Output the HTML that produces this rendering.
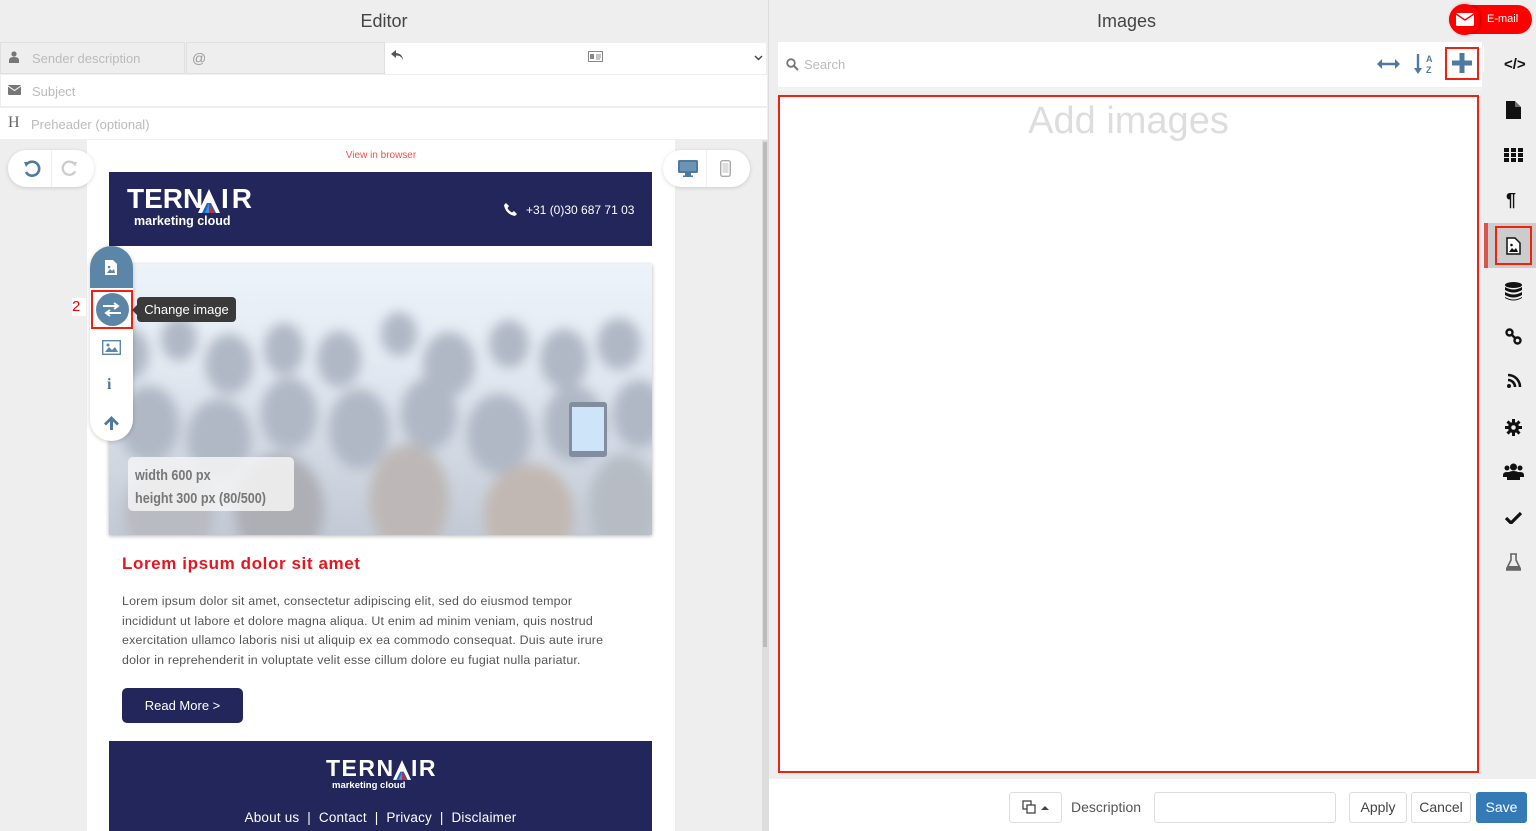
<!DOCTYPE html>
<html><head><meta charset="utf-8"><style>
*{box-sizing:border-box;margin:0;padding:0}
body{width:1536px;height:831px;overflow:hidden;background:#eee;font-family:"Liberation Sans",sans-serif;position:relative}
.abs{position:absolute}
.ph{color:#bbb;font-size:13px}
.ic{position:absolute}
.lg{position:absolute;color:#fff;font-weight:bold;white-space:nowrap}
</style></head><body>
<!-- LEFT -->
<div class="abs" style="left:0;top:0;width:768px;height:42px;background:#eee;text-align:center;line-height:42px;font-size:18px;color:#444">Editor</div>
<div class="abs" style="left:0;top:42px;width:185px;height:32px;background:#eee;border:1px solid #e0e0e0"></div>
<div class="abs" style="left:186px;top:42px;width:199px;height:32px;background:#eee;border:1px solid #e0e0e0"></div>
<div class="abs" style="left:385px;top:43px;width:381px;height:31px;background:#fff"></div>
<svg class="ic" style="left:9px;top:51px" width="10" height="12" viewBox="0 0 10 12"><circle cx="5" cy="3" r="2.6" fill="#777"/><path d="M0 12V9q0-3 5-3t5 3v3z" fill="#777"/></svg>
<div class="abs ph" style="left:32px;top:51px">Sender description</div>
<div class="abs" style="left:192px;top:50px;color:#999;font-size:14px">@</div>
<svg class="ic" style="left:391px;top:50px" width="13" height="11" viewBox="0 0 13 11"><path d="M5 0L0 4l5 4V5.5c4 0 6 1.5 7 5 0-4-2-7-7-7.5z" fill="#555"/></svg>
<svg class="ic" style="left:588px;top:51px" width="15" height="11" viewBox="0 0 15 11"><rect x=".5" y=".5" width="14" height="10" fill="#fff" stroke="#888"/><rect x="2" y="3" width="4" height="5" fill="#888"/><path d="M8 4h5M8 6h5M8 8h4" stroke="#888"/></svg>
<svg class="ic" style="left:754px;top:55px" width="9" height="6" viewBox="0 0 9 6"><path d="M1 1l3.5 3.5L8 1" fill="none" stroke="#444" stroke-width="1.4"/></svg>
<div class="abs" style="left:1px;top:75px;width:766px;height:31px;background:#fff"></div>
<svg class="ic" style="left:8px;top:85px" width="13" height="10" viewBox="0 0 13 10"><rect width="13" height="10" rx="1" fill="#777"/><path d="M0 1l6.5 4.5L13 1" stroke="#fff" fill="none"/></svg>
<div class="abs ph" style="left:32px;top:84px">Subject</div>
<div class="abs" style="left:0;top:108px;width:767px;height:31px;background:#fff"></div>
<div class="abs" style="left:8px;top:114px;font-family:'Liberation Serif',serif;font-size:16px;color:#666">H</div>
<div class="abs ph" style="left:31px;top:117px">Preheader (optional)</div>
<!-- scrollbar -->
<div class="abs" style="left:762px;top:140px;width:6px;height:691px;background:#ddd"></div>
<div class="abs" style="left:763px;top:142px;width:4px;height:505px;background:#bbb"></div>
<!-- email page -->
<div class="abs" style="left:87px;top:140px;width:588px;height:691px;background:#fff"></div>
<div class="abs" style="left:87px;top:150px;width:588px;text-align:center;font-size:10px;color:#f05050">View in browser</div>
<!-- undo/redo -->
<div class="abs" style="left:8px;top:150px;width:86px;height:37px;background:#fff;border-radius:19px;box-shadow:0 1px 4px rgba(0,0,0,.15)"></div>
<div class="abs" style="left:51px;top:150px;width:1px;height:37px;background:#eee"></div>
<svg class="ic" style="left:23px;top:160px" width="18" height="18" viewBox="0 0 18 18"><path d="M4 4a7 7 0 1 1-1 8" fill="none" stroke="#4f7aa0" stroke-width="2.6"/><path d="M1 2l6 0-4 5z" fill="#4f7aa0"/></svg>
<svg class="ic" style="left:61px;top:160px" width="17" height="17" viewBox="0 0 18 18"><path d="M14 4a7 7 0 1 0 1 8" fill="none" stroke="#ccc" stroke-width="2.4"/><path d="M17 2l-6 0 4 5z" fill="#ccc"/></svg>
<div class="abs" style="left:663px;top:150px;width:87px;height:37px;background:#fff;border-radius:19px;box-shadow:0 1px 4px rgba(0,0,0,.15)"></div>
<div class="abs" style="left:706px;top:150px;width:1px;height:37px;background:#eee"></div>
<svg class="ic" style="left:678px;top:160px" width="20" height="17" viewBox="0 0 20 17"><rect x="0" y="0" width="20" height="13" rx="1.5" fill="#4f7aa0"/><rect x="2" y="2" width="16" height="9" fill="#6d93b5"/><rect x="7" y="13" width="6" height="3" fill="#4f7aa0"/><rect x="5" y="15.5" width="10" height="1.5" fill="#4f7aa0"/></svg>
<svg class="ic" style="left:720px;top:160px" width="11" height="17" viewBox="0 0 11 17"><rect x=".7" y=".7" width="9.6" height="15.6" rx="2" fill="none" stroke="#aaa" stroke-width="1.4"/><rect x="2.5" y="3" width="6" height="10" fill="#ddd"/></svg>
<!-- header -->
<div class="abs" style="left:109px;top:172px;width:543px;height:74px;background:#22265a"></div>
<div class="lg" style="left:127px;top:183px;font-size:28px">TERN</div>
<svg class="ic" style="left:198px;top:189px" width="22" height="24" viewBox="0 0 22 24"><path d="M11 0L0 24h7l4-9 4 9h7z" fill="#fff"/><path d="M4 24l5-10h4l5 10z" fill="#1e62c8"/><path d="M11 14l5 10h-5z" fill="#e0202a"/><path d="M7 24l4-10v10z" fill="#2d9be0"/></svg>
<div class="lg" style="left:221px;top:183px;font-size:28px;letter-spacing:3px">IR</div>
<div class="abs" style="left:134px;top:214px;color:#fff;font-weight:bold;font-size:12.5px">marketing cloud</div>
<svg class="ic" style="left:504px;top:203px" width="13" height="13" viewBox="0 0 13 13"><path d="M2 0l3 3-1.5 2c1 2 2.5 3.5 4.5 4.5L10 8l3 3-2 2C5 12 1 8 0 2z" fill="#fff"/></svg>
<div class="abs" style="left:526px;top:203px;color:#fff;font-size:12px">+31 (0)30 687 71 03</div>
<!-- image -->
<div class="abs" style="left:109px;top:264px;width:543px;height:271px;box-shadow:0 1px 4px rgba(0,0,0,.3);overflow:hidden;background:#dde5ef">
<svg width="543" height="271" viewBox="0 0 543 271"><defs><filter id="b"><feGaussianBlur stdDeviation="6"/></filter><linearGradient id="sk" x1="0" y1="0" x2="0" y2="1"><stop offset="0" stop-color="#e6eef7"/><stop offset=".35" stop-color="#d8e2ee"/><stop offset="1" stop-color="#a9b3c3"/></linearGradient></defs>
<rect width="543" height="271" fill="url(#sk)"/>
<g filter="url(#b)" fill="#8e9aad">
<ellipse cx="20" cy="90" rx="20" ry="26"/><ellipse cx="70" cy="75" rx="18" ry="22"/><ellipse cx="120" cy="100" rx="24" ry="30"/><ellipse cx="175" cy="85" rx="20" ry="26"/><ellipse cx="230" cy="95" rx="22" ry="28"/><ellipse cx="290" cy="70" rx="18" ry="22"/><ellipse cx="340" cy="100" rx="26" ry="32"/><ellipse cx="400" cy="80" rx="20" ry="24"/><ellipse cx="455" cy="95" rx="24" ry="30"/><ellipse cx="510" cy="80" rx="22" ry="26"/>
<ellipse cx="40" cy="160" rx="30" ry="38"/><ellipse cx="110" cy="175" rx="32" ry="40"/><ellipse cx="180" cy="150" rx="28" ry="36"/><ellipse cx="250" cy="165" rx="30" ry="40"/><ellipse cx="320" cy="150" rx="28" ry="36"/><ellipse cx="390" cy="170" rx="32" ry="40"/><ellipse cx="465" cy="160" rx="30" ry="38"/><ellipse cx="530" cy="150" rx="26" ry="34"/>
<ellipse cx="60" cy="250" rx="45" ry="50" fill="#9b9ea8"/><ellipse cx="170" cy="245" rx="45" ry="55" fill="#8b8d96"/><ellipse cx="300" cy="235" rx="40" ry="55" fill="#a19a98"/><ellipse cx="420" cy="250" rx="45" ry="50" fill="#a89a92"/><ellipse cx="515" cy="240" rx="35" ry="50" fill="#98a0ab"/>
</g>
<rect x="460" y="138" width="38" height="55" rx="3" fill="#4c5d78"/><rect x="463" y="143" width="32" height="44" fill="#b9d8f5"/>
<rect width="543" height="271" fill="#fff" opacity=".3"/>
</svg></div>
<div class="abs" style="left:128px;top:457px;width:166px;height:54px;background:rgba(245,245,245,.85);border-radius:5px"></div>
<div class="abs" style="left:135px;top:464px;font-size:15px;font-weight:bold;color:#777;line-height:23px;white-space:nowrap;transform:scaleX(.84);transform-origin:left top">width 600 px<br>height 300 px (80/500)</div>
<!-- toolbar -->
<div class="abs" style="left:90px;top:246px;width:43px;height:195px;background:#fff;border-radius:22px;box-shadow:0 1px 5px rgba(0,0,0,.2);overflow:hidden"><div style="height:42px;background:#5b86a8"></div></div>
<svg class="ic" style="left:104px;top:259px" width="14" height="17" viewBox="0 0 14 17"><path d="M1 1h8l4 4v11H1z" fill="#fff"/><path d="M3 14l3-4 2 2 2-2 1 4z" fill="#5b86a8"/><circle cx="5" cy="8" r="1.3" fill="#5b86a8"/></svg>
<div class="abs" style="left:72px;top:298px;width:14px;height:18px;background:#fff;color:#e00;font-size:15px">2</div>
<div class="abs" style="left:91px;top:290px;width:42px;height:39px;border:2px solid #e21"></div>
<div class="abs" style="left:96px;top:293px;width:33px;height:33px;border-radius:50%;background:#5b86a8"></div>
<svg class="ic" style="left:102px;top:302px" width="20" height="15" viewBox="0 0 20 15"><path d="M1 4h15M12 1l4 3-4 3M19 11H4M8 8l-4 3 4 3" fill="none" stroke="#fff" stroke-width="2"/></svg>
<div class="abs" style="left:137px;top:297px;width:99px;height:25px;background:#3a3a3a;border-radius:4px;color:#fff;font-size:13px;line-height:25px;text-align:center">Change image</div>
<div class="abs" style="left:132px;top:305px;border:5px solid transparent;border-right-color:#3a3a3a;border-left:0"></div>
<svg class="ic" style="left:102px;top:340px" width="19" height="15" viewBox="0 0 19 15"><rect x=".7" y=".7" width="17.6" height="13.6" fill="#fff" stroke="#5b86a8" stroke-width="1.4"/><path d="M3 12l4-5 3 3 3-3 3 5z" fill="#5b86a8"/><circle cx="6" cy="5" r="1.5" fill="#5b86a8"/></svg>
<div class="abs" style="left:107px;top:376px;font-weight:bold;color:#4f7aa0;font-size:16px;font-family:'Liberation Serif',serif">i</div>
<svg class="ic" style="left:104px;top:416px" width="15" height="14" viewBox="0 0 15 14"><path d="M7.5 0L0 7.5l2 2 4-4V14h3V5.5l4 4 2-2z" fill="#4f7aa0"/></svg>
<!-- text -->
<div class="abs" style="left:122px;top:554px;color:#e8141e;font-weight:bold;font-size:17px;letter-spacing:.6px">Lorem ipsum dolor sit amet</div>
<div class="abs" style="left:122px;top:592px;white-space:nowrap;color:#555;font-size:12.4px;line-height:19.6px;letter-spacing:.2px">Lorem ipsum dolor sit amet, consectetur adipiscing elit, sed do eiusmod tempor<br>incididunt ut labore et dolore magna aliqua. Ut enim ad minim veniam, quis nostrud<br>exercitation ullamco laboris nisi ut aliquip ex ea commodo consequat. Duis aute irure<br>dolor in reprehenderit in voluptate velit esse cillum dolore eu fugiat nulla pariatur.</div>
<div class="abs" style="left:122px;top:688px;width:121px;height:35px;background:#22265a;border-radius:5px;color:#fff;font-size:13px;line-height:35px;text-align:center">Read More &gt;</div>
<!-- footer -->
<div class="abs" style="left:109px;top:741px;width:543px;height:90px;background:#22265a"></div>
<div class="lg" style="left:326px;top:755px;font-size:23px;letter-spacing:1.5px">TERN</div>
<svg class="ic" style="left:393px;top:760px" width="18" height="20" viewBox="0 0 22 24"><path d="M11 0L0 24h7l4-9 4 9h7z" fill="#fff"/><path d="M4 24l5-10h4l5 10z" fill="#1e62c8"/><path d="M11 14l5 10h-5z" fill="#e0202a"/><path d="M7 24l4-10v10z" fill="#2d9be0"/></svg>
<div class="lg" style="left:411px;top:755px;font-size:23px;letter-spacing:1.5px">IR</div>
<div class="abs" style="left:332px;top:780px;color:#fff;font-weight:bold;font-size:9.5px">marketing cloud</div>
<div class="abs" style="left:109px;top:810px;width:543px;text-align:center;color:#fff;font-size:13.5px;letter-spacing:.2px">About us &nbsp;|&nbsp; Contact &nbsp;|&nbsp; Privacy &nbsp;|&nbsp; Disclaimer</div>

<!-- RIGHT -->
<div class="abs" style="left:768px;top:0;width:1px;height:831px;background:#ddd"></div>
<div class="abs" style="left:769px;top:0;width:715px;height:42px;text-align:center;line-height:42px;font-size:18px;color:#444">Images</div>
<div class="abs" style="left:1449px;top:5px;width:83px;height:29px;background:#f00;border-radius:15px"></div>
<div class="abs" style="left:1449px;top:4px;width:31px;height:31px;background:#f00;border-radius:50%;box-shadow:1px 0 3px rgba(0,0,0,.3)"></div>
<svg class="ic" style="left:1456px;top:13px" width="18" height="13" viewBox="0 0 18 13"><rect width="18" height="13" rx="1.5" fill="#fff"/><path d="M0 1l9 6 9-6" fill="none" stroke="#f00" stroke-width="1.5"/></svg>
<div class="abs" style="left:1487px;top:13px;color:#fff;font-size:11px">E-mail</div>
<div class="abs" style="left:778px;top:42px;width:704px;height:45px;background:#fff"></div>
<svg class="ic" style="left:786px;top:58px" width="13" height="13" viewBox="0 0 13 13"><circle cx="5" cy="5" r="3.8" fill="none" stroke="#777" stroke-width="1.8"/><path d="M8 8l4 4" stroke="#777" stroke-width="2"/></svg>
<div class="abs ph" style="left:804px;top:57px">Search</div>
<svg class="ic" style="left:1377px;top:58px" width="23" height="12" viewBox="0 0 23 12"><path d="M3 6h17" stroke="#4f7aa0" stroke-width="2.4"/><path d="M0 6l5-5v10zM23 6l-5-5v10z" fill="#4f7aa0"/></svg>
<svg class="ic" style="left:1414px;top:53px" width="22" height="22" viewBox="0 0 22 22"><path d="M4 1v16" stroke="#4f7aa0" stroke-width="2.4"/><path d="M0 15l4 6 4-6z" fill="#4f7aa0"/><text x="12" y="9" font-size="9" font-family="Liberation Sans" fill="#4f7aa0" font-weight="bold">A</text><text x="12" y="20" font-size="9" font-family="Liberation Sans" fill="#4f7aa0" font-weight="bold">Z</text></svg>
<div class="abs" style="left:1445px;top:47px;width:34px;height:33px;border:2px solid #e21"></div>
<svg class="ic" style="left:1452px;top:53px" width="20" height="20" viewBox="0 0 20 20"><path d="M7.5 0h5v7.5H20v5h-7.5V20h-5v-7.5H0v-5h7.5z" fill="#4f7aa0"/></svg>
<div class="abs" style="left:1483px;top:46px;width:17px;height:26px;background:#fff;color:#e00;font-size:14px;text-align:center;line-height:26px">1</div>
<div class="abs" style="left:778px;top:88px;width:704px;height:3px;background:#f3f3f3"></div>
<div class="abs" style="left:778px;top:95px;width:701px;height:678px;background:#fff;border:2px solid #e21"></div>
<div class="abs" style="left:780px;top:100px;width:697px;text-align:center;font-size:38px;color:#ddd">Add images</div>
<div class="abs" style="left:769px;top:779px;width:767px;height:52px;background:#fff"></div>
<div class="abs" style="left:1484px;top:42px;width:52px;height:737px;background:#eee"></div>
<!-- sidebar icons -->
<div class="abs" style="left:1504px;top:56px;font-size:15px;font-weight:bold;color:#111">&lt;/&gt;</div>
<svg class="ic" style="left:1506px;top:101px" width="15" height="18" viewBox="0 0 15 18"><path d="M0 0h9l6 6v12H0z" fill="#111"/><path d="M9 0v6h6" fill="#fff" opacity=".4"/></svg>
<svg class="ic" style="left:1504px;top:148px" width="19" height="14" viewBox="0 0 19 14"><g fill="#111"><rect x="0" y="0" width="5" height="4"/><rect x="7" y="0" width="5" height="4"/><rect x="14" y="0" width="5" height="4"/><rect x="0" y="5" width="5" height="4"/><rect x="7" y="5" width="5" height="4"/><rect x="14" y="5" width="5" height="4"/><rect x="0" y="10" width="5" height="4"/><rect x="7" y="10" width="5" height="4"/><rect x="14" y="10" width="5" height="4"/></g></svg>
<div class="abs" style="left:1506px;top:190px;font-size:18px;font-weight:bold;color:#111">¶</div>
<div class="abs" style="left:1484px;top:223px;width:52px;height:45px;background:#ccc"></div>
<div class="abs" style="left:1484px;top:223px;width:4px;height:45px;background:#d9534f"></div>
<div class="abs" style="left:1495px;top:226px;width:37px;height:39px;border:2px solid #e21"></div>
<svg class="ic" style="left:1506px;top:237px" width="15" height="18" viewBox="0 0 15 18"><path d="M1 1h8l5 5v11H1z" fill="#fff" stroke="#111" stroke-width="1.5"/><path d="M3 15l3-4 2 2 2-2 2 4z" fill="#111"/><circle cx="5.5" cy="8" r="1.3" fill="#111"/></svg>
<svg class="ic" style="left:1505px;top:282px" width="17" height="19" viewBox="0 0 17 19"><g fill="#111"><ellipse cx="8.5" cy="3" rx="8.5" ry="3"/><path d="M0 5q8.5 5 17 0v3q-8.5 5-17 0zM0 10q8.5 5 17 0v3q-8.5 5-17 0zM0 15q8.5 5 17 0v1q-8.5 5-17 0z"/></g></svg>
<svg class="ic" style="left:1505px;top:328px" width="17" height="17" viewBox="0 0 17 17"><g fill="none" stroke="#111" stroke-width="2.4"><circle cx="4.5" cy="4.5" r="3"/><circle cx="12.5" cy="12.5" r="3"/><path d="M6.5 6.5l4 4"/></g></svg>
<svg class="ic" style="left:1507px;top:373px" width="15" height="15" viewBox="0 0 15 15"><g fill="none" stroke="#111" stroke-width="2.6"><path d="M1 7a7 7 0 0 1 7 7"/><path d="M1 2a12 12 0 0 1 12 12"/></g><circle cx="2" cy="13" r="2" fill="#111"/></svg>
<svg class="ic" style="left:1505px;top:419px" width="17" height="17" viewBox="0 0 17 17"><g fill="#111"><circle cx="8.5" cy="8.5" r="5.5"/><rect x="7" y="0" width="3" height="17"/><rect x="0" y="7" width="17" height="3"/><rect x="7" y="0" width="3" height="17" transform="rotate(45 8.5 8.5)"/><rect x="7" y="0" width="3" height="17" transform="rotate(-45 8.5 8.5)"/></g><circle cx="8.5" cy="8.5" r="2.3" fill="#eee"/></svg>
<svg class="ic" style="left:1503px;top:463px" width="21" height="17" viewBox="0 0 21 17"><g fill="#111"><circle cx="10.5" cy="4" r="3.5"/><circle cx="4" cy="5" r="2.5"/><circle cx="17" cy="5" r="2.5"/><path d="M4 17v-4q0-5 6.5-5t6.5 5v4z"/><path d="M0 14v-2q0-3 4-3t4 1v4zM21 14v-2q0-3-4-3t-4 1v4z"/></g></svg>
<svg class="ic" style="left:1505px;top:511px" width="17" height="13" viewBox="0 0 17 13"><path d="M1 7l5 5L16 2" fill="none" stroke="#111" stroke-width="3.2"/></svg>
<svg class="ic" style="left:1506px;top:553px" width="15" height="18" viewBox="0 0 15 18"><path d="M4 1h7M5 1v6L0 17h15L10 7V1" fill="none" stroke="#666" stroke-width="1.6"/><path d="M2.5 13h10l2 4H.5z" fill="#666"/></svg>
<!-- bottom bar -->
<div class="abs" style="left:1009px;top:792px;width:53px;height:31px;border:1px solid #ddd;border-radius:3px;background:#fff"></div>
<svg class="ic" style="left:1022px;top:800px" width="14" height="14" viewBox="0 0 14 14"><rect x="1" y="1" width="8" height="8" fill="none" stroke="#444" stroke-width="1.3"/><rect x="5" y="5" width="8" height="8" fill="#fff" stroke="#444" stroke-width="1.3"/></svg>
<svg class="ic" style="left:1041px;top:805px" width="8" height="5" viewBox="0 0 8 5"><path d="M0 5l4-4 4 4z" fill="#444"/></svg>
<div class="abs" style="left:1071px;top:799px;font-size:14px;color:#555">Description</div>
<div class="abs" style="left:1154px;top:792px;width:182px;height:31px;border:1px solid #ddd;border-radius:3px;background:#fff"></div>
<div class="abs" style="left:1349px;top:792px;width:58px;height:31px;border:1px solid #ddd;border-radius:3px;font-size:14px;color:#444;text-align:center;line-height:29px">Apply</div>
<div class="abs" style="left:1411px;top:792px;width:60px;height:31px;border:1px solid #ddd;border-radius:3px;font-size:14px;color:#444;text-align:center;line-height:29px">Cancel</div>
<div class="abs" style="left:1476px;top:792px;width:51px;height:31px;background:#337ab7;border-radius:3px;font-size:14px;color:#fff;text-align:center;line-height:31px">Save</div>
</body></html>
